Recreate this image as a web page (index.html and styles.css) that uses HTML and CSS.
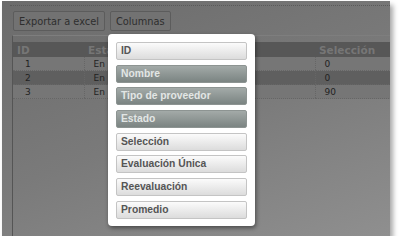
FILE: index.html
```html
<!DOCTYPE html>
<html lang="es">
<head>
    <meta charset="UTF-8">
    <title>Columnas</title>
    <link rel="stylesheet" href="styles.css">
</head>
<body>
    <div class="screen">
        <div class="toolbar">
            <button class="tool-btn">Exportar a excel</button>
            <button class="tool-btn">Columnas</button>
        </div>
        <div class="content">
            <table class="grid">
                <thead>
                    <tr>
                        <th class="col-id">ID</th>
                        <th class="col-estado">Esta</th>
                        <th class="col-sel">Selección</th>
                    </tr>
                </thead>
                <tbody>
                    <tr><td class="num">1</td><td>En</td><td>0</td></tr>
                    <tr class="alt"><td class="num">2</td><td>En</td><td>0</td></tr>
                    <tr><td class="num">3</td><td>En</td><td>90</td></tr>
                </tbody>
            </table>
        </div>

        <!-- column picker -->
        <div class="picker">
            <div class="pick">ID</div>
            <div class="pick on">Nombre</div>
            <div class="pick on">Tipo de proveedor</div>
            <div class="pick on">Estado</div>
            <div class="pick">Selección</div>
            <div class="pick">Evaluación Única</div>
            <div class="pick">Reevaluación</div>
            <div class="pick">Promedio</div>
        </div>
    </div>
</body>
</html>
```

FILE: styles.css
```css
body {
    margin: 0;
    background-color: #fff;
    font-family: 'Liberation Sans', Arial, sans-serif;
}

.screen {
    position: relative;
    margin: 1px 0 0 2px;
    width: 388px;
    height: 235px;
    background: linear-gradient(160deg, #6b6b6b 0%, #7a7a7a 50%, #8f8f8f 100%);
    box-shadow: 3px 4px 5px rgba(0, 0, 0, 0.35);
    overflow: hidden;
}

.toolbar {
    margin-left: 8px;
    border-top: 1px dotted #5a5a5a;
    margin-top: 4px;
    padding: 5px 0 0 3px;
    display: flex;
    gap: 5px;
    height: 21px;
}

.tool-btn {
    height: 20px;
    padding: 0 5px;
    background-color: #727272;
    border: 1px solid #5c5c5c;
    border-radius: 2px;
    color: #2e2e2e;
    font-family: 'DejaVu Sans', sans-serif;
    font-size: 9.8px;
}

.content {
    margin: 3px 0 0 10px;
    border-left: 1px solid #555;
    border-top: 1px solid #7e7e7e;
    height: 205px;
    padding-top: 6px;
}

.grid {
    width: 378px;
    border-collapse: collapse;
    font-family: 'DejaVu Sans', sans-serif;
    font-size: 9px;
}

.grid th {
    height: 15px;
    padding: 0 4px;
    background-color: #575757;
    color: #767676;
    text-align: left;
    font-weight: bold;
    font-size: 10.5px;
}

.grid td {
    height: 13px;
    padding: 0 0 0 9px;
    color: #222;
    border-left: 1px dotted #666;
    border-bottom: 1px dotted #666;
    background-color: #767676;
}

.grid td:first-child {
    border-left: none;
}

.grid td.num {
    padding-left: 12px;
}

.grid tr.alt td {
    background-color: #5f5f5f;
}

.col-id { width: 63px; }
.col-sel { width: 68px; }

.picker {
    position: absolute;
    left: 106px;
    top: 33px;
    width: 131px;
    padding: 8px 8px 7px;
    background-color: #fff;
    border-radius: 4px;
    box-shadow: 1px 2px 4px rgba(0, 0, 0, 0.45);
    display: flex;
    flex-direction: column;
    gap: 4.7px;
}

.pick {
    height: 16px;
    line-height: 16px;
    padding-left: 4px;
    border: 1px solid #c4c4c4;
    border-radius: 2px;
    background: linear-gradient(#fbfbfb, #dcdcdc);
    color: #555;
    font-size: 10.3px;
    font-weight: bold;
}

.pick.on {
    border-color: #8d9492;
    background: linear-gradient(#a3aaa8, #7b8482);
    color: #e2e6e5;
}
```
